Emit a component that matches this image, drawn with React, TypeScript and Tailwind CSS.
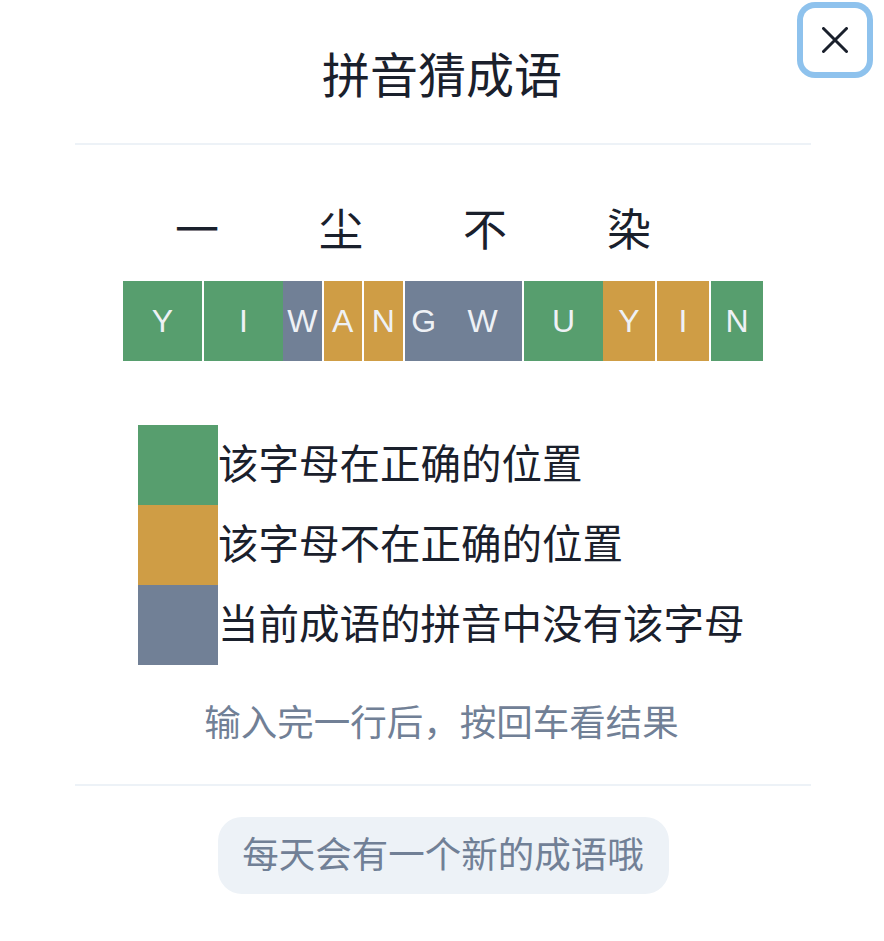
import React from "react";

const GREEN = "bg-[#579e6e]";
const ORANGE = "bg-[#cf9d45]";
const GRAY = "bg-[#718096]";

type Tile = { l: string; c: string };

const syllables: Tile[][] = [
  [
    { l: "Y", c: GREEN },
    { l: "I", c: GREEN },
  ],
  [
    { l: "W", c: GRAY },
    { l: "A", c: ORANGE },
    { l: "N", c: ORANGE },
    { l: "G", c: GRAY },
  ],
  [
    { l: "W", c: GRAY },
    { l: "U", c: GREEN },
  ],
  [
    { l: "Y", c: ORANGE },
    { l: "I", c: ORANGE },
    { l: "N", c: GREEN },
  ],
];

const chars = ["一", "尘", "不", "染"];

const legend = [
  { c: GREEN, t: "该字母在正确的位置" },
  { c: ORANGE, t: "该字母不在正确的位置" },
  { c: GRAY, t: "当前成语的拼音中没有该字母" },
];

export default function App() {
  return (
    <div
      className="relative w-[884px] h-[941px] bg-white text-[#1a202c] overflow-hidden"
      style={{ fontFamily: '"Noto Sans CJK SC", "Noto Sans", sans-serif' }}
    >
      <button className="absolute top-[8px] right-[17px] w-16 h-16 rounded-xl ring-[6px] ring-[#8ec2ed] flex items-center justify-center bg-white">
        <svg width="26" height="26" viewBox="0 0 26 26" fill="none">
          <path
            d="M1.5 1.5 L24.5 24.5 M24.5 1.5 L1.5 24.5"
            stroke="#1a202c"
            strokeWidth="3"
            strokeLinecap="round"
          />
        </svg>
      </button>

      <div className="ml-[75px] w-[736px] flex flex-col">
        <div className="h-[143px] flex items-center justify-center text-[48px] leading-none pr-[2px]">
          拼音猜成语
        </div>
        <div className="h-[2px] bg-[#edf2f7]" />

        <div className="mt-[60px] w-[640px] mx-auto flex pl-[2px] text-[44px] leading-none">
          {chars.map((ch, i) => (
            <div key={i} className="w-[144px] h-[44px] flex items-center justify-center">
              {ch}
            </div>
          ))}
        </div>

        <div className="mt-[32px] w-[640px] mx-auto flex h-[80px]">
          {syllables.map((s, i) => (
            <div key={i} className="w-[160px] flex gap-[2px]">
              {s.map((t, j) => (
                <div
                  key={j}
                  className={`flex-1 ${t.c} flex items-center justify-center text-[32px] text-[#eef1f5]`}
                  style={{ fontFamily: '"Liberation Sans", Arial, sans-serif' }}
                >
                  {t.l}
                </div>
              ))}
            </div>
          ))}
        </div>

        <div className="mt-[64px] ml-[63px] flex flex-col">
          {legend.map((r, i) => (
            <div key={i} className="flex items-center h-[80px]">
              <div className={`w-[80px] h-[80px] ${r.c}`} />
              <div className="text-[40.5px] leading-none mb-[5px]">{r.t}</div>
            </div>
          ))}
        </div>

        <div className="mt-[38px] text-center text-[36.5px] leading-none text-[#718096] pr-[3px]">
          输入完一行后，按回车看结果
        </div>

        <div className="mt-[44px] h-[2px] bg-[#edf2f7]" />

        <div className="mt-[31px] flex justify-center">
          <div className="w-[451px] h-[77px] rounded-[24px] bg-[#edf2f7] flex items-center justify-center text-[36.5px] leading-none text-[#718096] pb-[4px]">
            每天会有一个新的成语哦
          </div>
        </div>
      </div>
    </div>
  );
}
